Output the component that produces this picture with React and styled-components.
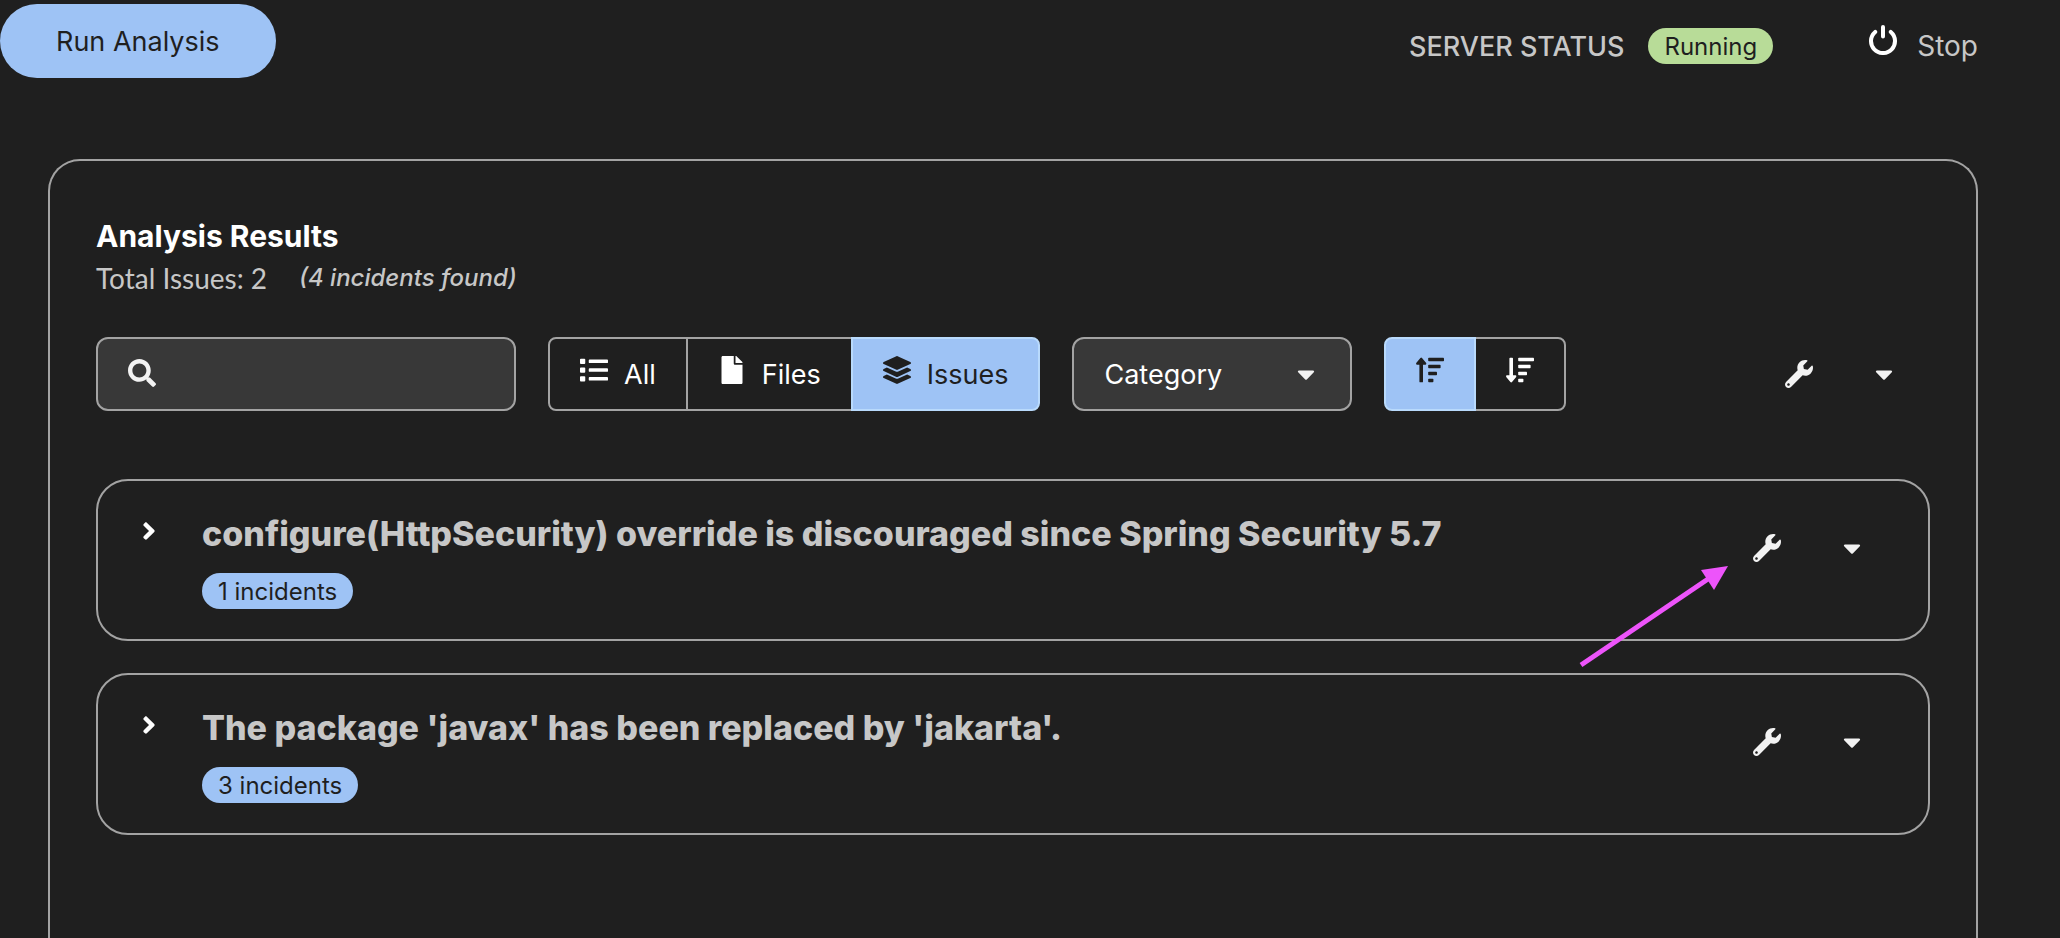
import React, { useState } from "react";
import styled, { createGlobalStyle, css } from "styled-components";
import {
  FaAngleRight,
  FaCaretDown,
  FaFile,
  FaLayerGroup,
  FaList,
  FaSearch,
  FaWrench,
} from "react-icons/fa";

const color = {
  page: "#1f1f1f",
  control: "#383838",
  border: "#a3a3a3",
  text: "#ffffff",
  subtle: "#c7c7c7",
  icon: "#f2f2f2",
  brand: "#9ec3f5",
  brandBorder: "#b9dafc",
  success: "#b8dc98",
  onBrand: "#1f1f1f",
  marker: "#ed54fa",
};

const GlobalStyle = createGlobalStyle`
  *, *::before, *::after { box-sizing: border-box; }
  body {
    margin: 0;
    background: ${color.page};
    color: ${color.text};
    font-family: Inter, "Liberation Sans", sans-serif;
    font-size: 28px;
  }
  h1, h2, p, ul { margin: 0; padding: 0; }
  button, input, select { font: inherit; color: inherit; margin: 0; }
  button { cursor: pointer; }
  svg { flex: none; }
`;

const Page = styled.div`
  display: flex;
  flex-direction: column;
  min-height: 100vh;
`;

const Header = styled.header`
  display: flex;
  justify-content: space-between;
  align-items: flex-start;
  padding: 4px 82px 0 0;
`;

const PrimaryButton = styled.button`
  height: 74px;
  padding: 0 56px;
  border: 0;
  border-radius: 37px;
  background: ${color.brand};
  color: ${color.onBrand};
  font-size: 27px;
`;

const ServerStatus = styled.div`
  display: flex;
  align-items: center;
  height: 84px;
  color: ${color.subtle};
`;

const StatusLabel = styled.span`
  font-size: 27px;
  font-weight: 500;
  margin-right: 24px;
`;

const Badge = styled.span`
  display: inline-flex;
  align-items: center;
  height: 36px;
  padding: 0 16px;
  border-radius: 18px;
  font-size: 24px;
  background: ${({ $tone }) => ($tone === "success" ? color.success : color.brand)};
  color: ${color.onBrand};
`;

const RaisedIcon = styled.span`
  display: flex;
  font-size: 28px;
  padding-bottom: ${({ $lift }) => $lift}px;
`;

const StopButton = styled.button`
  display: flex;
  align-items: center;
  gap: 20px;
  margin-left: 96px;
  padding: 0;
  border: 0;
  background: none;
  color: ${color.subtle};

  svg { color: ${color.text}; }
`;

const ResultsCard = styled.main`
  flex: 1;
  margin: 71px 82px 0 48px;
  padding: 54px 46px 0;
  border: 2px solid ${color.border};
  border-bottom: 0;
  border-radius: 32px 32px 0 0;
`;

const ResultsTitle = styled.h1`
  font-size: 30px;
  font-weight: 700;
  line-height: 42px;
`;

const Summary = styled.p`
  display: flex;
  align-items: center;
  gap: 32px;
  line-height: 42px;
  color: ${color.subtle};

  span { font-family: Lato, "Liberation Sans", sans-serif; }
  em { font-size: 24px; font-weight: 500; }
`;

const Toolbar = styled.div`
  display: flex;
  align-items: center;
  gap: 32px;
  margin-top: 38px;
  font-size: 27px;
`;

const field = css`
  height: 74px;
  border: 2px solid ${color.border};
  border-radius: 12px;
  background: ${color.control};
`;

const SearchField = styled.label`
  ${field}
  display: flex;
  align-items: center;
  gap: 16px;
  width: 420px;
  padding: 0 30px;
  color: ${color.icon};

  input {
    flex: 1;
    min-width: 0;
    border: 0;
    outline: 0;
    background: none;
  }
`;

const ToggleGroup = styled.div`
  display: flex;
`;

const ToggleButton = styled.button`
  display: flex;
  align-items: center;
  gap: 16px;
  height: 74px;
  padding: 0 30px;
  border: 2px solid ${({ $selected }) => ($selected ? color.brandBorder : color.border)};
  background: ${({ $selected }) => ($selected ? color.brand : "transparent")};
  color: ${({ $selected }) => ($selected ? color.onBrand : color.text)};
  position: relative;
  z-index: ${({ $selected }) => ($selected ? 1 : 0)};

  & + & { margin-left: -2px; }
  &:first-child { border-radius: 8px 0 0 8px; }
  &:last-child { border-radius: 0 8px 8px 0; }
`;

const CategoryField = styled.label`
  display: grid;
  align-items: center;
  width: 280px;

  select, svg { grid-area: 1 / 1; }
  svg {
    justify-self: end;
    margin-right: 32px;
    font-size: 28px;
    color: ${color.icon};
    pointer-events: none;
  }
`;

const CategorySelect = styled.select`
  ${field}
  appearance: none;
  width: 100%;
  padding: 0 30px;
`;

const Actions = styled.div`
  display: flex;
  margin-left: auto;
`;

const IconButton = styled.button`
  display: flex;
  align-items: center;
  justify-content: center;
  width: 85px;
  height: 74px;
  padding: 0;
  border: 0;
  background: none;
  font-size: 28px;
  color: ${color.icon};
`;

const ToolbarActions = styled(Actions)`
  padding-right: 4px;
`;

const IssueList = styled.ul`
  display: flex;
  flex-direction: column;
  gap: 32px;
  margin-top: 68px;
  list-style: none;
`;

const IssueCard = styled.li`
  position: relative;
  display: flex;
  align-items: flex-start;
  gap: 39px;
  padding: 30px 34px 30px 37px;
  border: 2px solid ${color.border};
  border-radius: 32px;
`;

const ExpandButton = styled.button`
  display: flex;
  align-items: center;
  height: 40px;
  padding: 0;
  border: 0;
  background: none;
`;

const IssueBody = styled.div`
  display: flex;
  flex-direction: column;
  align-items: flex-start;
  gap: 16px;
`;

const IssueTitle = styled.h2`
  font-size: 34px;
  font-weight: 800;
  line-height: 46px;
  color: ${color.subtle};
`;

const Pointer = styled.svg`
  position: absolute;
  top: 84px;
  right: 199px;
  pointer-events: none;
`;

function PowerIcon() {
  return (
    <svg width="28" height="30" viewBox="0 0 28 30" aria-hidden="true">
      <path
        d="M14 2V11.6 M6.2 6.9A12 12 0 1 0 21.8 6.9"
        fill="none"
        stroke="currentColor"
        strokeWidth="4"
        strokeLinecap="round"
      />
    </svg>
  );
}

function SortIcon({ arrow }) {
  return (
    <svg width="28" height="28" viewBox="0 0 28 28" fill="currentColor" aria-hidden="true">
      <path d={arrow} />
      <rect x="12.2" y="1.8" width="15.8" height="3.5" rx="0.8" />
      <rect x="12.2" y="8.8" width="12.4" height="3.5" rx="0.8" />
      <rect x="12.2" y="15.8" width="8.8" height="3.5" rx="0.8" />
      <rect x="12.2" y="22.8" width="5.2" height="3.5" rx="0.8" />
    </svg>
  );
}

const SortUp = () => (
  <SortIcon arrow="M5.2 1.6Q5.7 1.6 6 2L10 6.8Q10.8 8.4 9.6 8.7H7V25.4Q7 26.3 6.2 26.3H4.2Q3.4 26.3 3.4 25.4V8.7H.8Q-.4 8.4.4 6.8L4.4 2Q4.7 1.6 5.2 1.6Z" />
);

const SortDown = () => (
  <SortIcon arrow="M5.2 26.4Q5.7 26.4 6 26L10 21.2Q10.8 19.6 9.6 19.3H7V2.6Q7 1.7 6.2 1.7H4.2Q3.4 1.7 3.4 2.6V19.3H.8Q-.4 19.6.4 21.2L4.4 26Q4.7 26.4 5.2 26.4Z" />
);

const views = [
  { id: "all", label: "All", Icon: FaList },
  { id: "files", label: "Files", Icon: FaFile },
  { id: "issues", label: "Issues", Icon: FaLayerGroup },
];

const sorts = [
  { id: "asc", label: "Sort ascending", Icon: SortUp },
  { id: "desc", label: "Sort descending", Icon: SortDown },
];

const issues = [
  {
    title: "configure(HttpSecurity) override is discouraged since Spring Security 5.7",
    incidents: 1,
    marked: true,
  },
  { title: "The package 'javax' has been replaced by 'jakarta'.", incidents: 3 },
];

function FixActions({ as: Wrapper = Actions }) {
  return (
    <Wrapper>
      <IconButton aria-label="Get solution"><FaWrench /></IconButton>
      <IconButton aria-label="More solutions"><FaCaretDown /></IconButton>
    </Wrapper>
  );
}

function Issue({ title, incidents, marked }) {
  return (
    <IssueCard>
      <ExpandButton aria-label="Expand issue"><FaAngleRight /></ExpandButton>
      <IssueBody>
        <IssueTitle>{title}</IssueTitle>
        <Badge>{incidents} incidents</Badge>
      </IssueBody>
      <FixActions />
      {marked && (
        <Pointer width="150" height="103" viewBox="0 0 150 103" aria-hidden="true">
          <path d="M2 100 L132 12" stroke={color.marker} strokeWidth="5" />
          <path d="M149 1 L122 5 L135 25 Z" fill={color.marker} />
        </Pointer>
      )}
    </IssueCard>
  );
}

export default function App() {
  const [view, setView] = useState("issues");
  const [sort, setSort] = useState("asc");
  const [query, setQuery] = useState("");

  return (
    <Page>
      <GlobalStyle />
      <Header>
        <PrimaryButton>Run Analysis</PrimaryButton>
        <ServerStatus>
          <StatusLabel>SERVER STATUS</StatusLabel>
          <Badge $tone="success">Running</Badge>
          <StopButton>
            <RaisedIcon $lift={12}><PowerIcon /></RaisedIcon>
            Stop
          </StopButton>
        </ServerStatus>
      </Header>
      <ResultsCard>
        <ResultsTitle>Analysis Results</ResultsTitle>
        <Summary>
          <span>Total Issues: 2</span>
          <em>(4 incidents found)</em>
        </Summary>
        <Toolbar>
          <SearchField>
            <RaisedIcon $lift={2}><FaSearch /></RaisedIcon>
            <input
              aria-label="Search"
              value={query}
              onChange={(event) => setQuery(event.target.value)}
            />
          </SearchField>
          <ToggleGroup>
            {views.map(({ id, label, Icon }) => (
              <ToggleButton key={id} $selected={view === id} onClick={() => setView(id)}>
                <RaisedIcon $lift={8}><Icon /></RaisedIcon>
                {label}
              </ToggleButton>
            ))}
          </ToggleGroup>
          <CategoryField>
            <CategorySelect aria-label="Category">
              <option>Category</option>
            </CategorySelect>
            <FaCaretDown />
          </CategoryField>
          <ToggleGroup>
            {sorts.map(({ id, label, Icon }) => (
              <ToggleButton
                key={id}
                aria-label={label}
                $selected={sort === id}
                onClick={() => setSort(id)}
              >
                <RaisedIcon $lift={8}><Icon /></RaisedIcon>
              </ToggleButton>
            ))}
          </ToggleGroup>
          <FixActions as={ToolbarActions} />
        </Toolbar>
        <IssueList>
          {issues.map((issue) => <Issue key={issue.title} {...issue} />)}
        </IssueList>
      </ResultsCard>
    </Page>
  );
}
